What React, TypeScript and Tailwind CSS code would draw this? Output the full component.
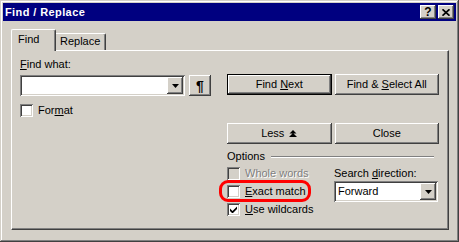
const font = "font-['Liberation_Sans',Arial,sans-serif]"
const raised =
  "shadow-[inset_-1px_-1px_0_#404040,inset_1px_1px_0_#ffffff,inset_-2px_-2px_0_#808080,inset_2px_2px_0_#d4d0c8]"
const sunken =
  "shadow-[inset_1px_1px_0_#808080,inset_-1px_-1px_0_#ffffff,inset_2px_2px_0_#404040,inset_-2px_-2px_0_#d4d0c8]"

function Arrow() {
  return (
    <svg width="7" height="4" viewBox="0 0 7 4">
      <path d="M0 0 H7 L3.5 4 Z" fill="#000" />
    </svg>
  )
}

function Combo({ value, className }: { value?: string; className: string }) {
  return (
    <div className={`h-[21px] bg-white p-[2px] flex ${sunken} ${className}`}>
      <div className="flex-1 flex items-center pl-[2px] text-black">{value}</div>
      <div className={`w-[16px] h-full bg-[#d4d0c8] flex items-center justify-center ${raised}`}>
        <Arrow />
      </div>
    </div>
  )
}

function Button({ children, isDefault }: { children: React.ReactNode; isDefault?: boolean }) {
  return (
    <div
      className={`h-[21px] w-[105px] bg-[#d4d0c8] flex items-center justify-center text-black ${raised} ${
        isDefault ? "border border-black" : ""
      }`}
    >
      {children}
    </div>
  )
}

function Checkbox({
  label,
  checked,
  disabled,
}: {
  label: React.ReactNode
  checked?: boolean
  disabled?: boolean
}) {
  return (
    <div className="flex items-center h-[13px] gap-[5px]">
      <div
        className={`w-[13px] h-[13px] flex items-center justify-center ${sunken} ${
          disabled ? "bg-[#d4d0c8]" : "bg-white"
        }`}
      >
        {checked && (
          <svg width="7" height="7" viewBox="0 0 7 7">
            <path d="M0 2.5 L2.5 5 L7 0.5 V3 L2.5 7.5 L0 5 Z" fill="#000" />
          </svg>
        )}
      </div>
      <span className={disabled ? "text-[#808080] [text-shadow:1px_1px_0_#ffffff]" : "text-black"}>{label}</span>
    </div>
  )
}

export default function App() {
  return (
    <div
      className={`relative w-[459px] h-[242px] bg-[#d4d0c8] p-[3px] text-[11px] leading-[13px] ${font} shadow-[inset_-1px_-1px_0_#404040,inset_1px_1px_0_#d4d0c8,inset_-2px_-2px_0_#808080,inset_2px_2px_0_#ffffff]`}
    >
      {/* Title bar */}
      <div className="h-[18px] bg-[#000080] flex items-center pl-[2px] pr-[2px]">
        <span className="flex-1 text-white font-bold tracking-[0.4px]">Find / Replace</span>
        <div className="flex gap-[2px]">
          <div className={`w-[16px] h-[14px] bg-[#d4d0c8] flex items-center justify-center ${raised}`}>
            <span className="font-bold text-[12px] leading-[12px] text-black">?</span>
          </div>
          <div className={`w-[16px] h-[14px] bg-[#d4d0c8] flex items-center justify-center ${raised}`}>
            <svg width="8" height="7" viewBox="0 0 8 7">
              <path d="M0.5 0.3 L7.5 6.7 M7.5 0.3 L0.5 6.7" stroke="#000" strokeWidth="1.7" />
            </svg>
          </div>
        </div>
      </div>

      {/* Body */}
      <div className="pt-[8px] pl-[8px]">
        {/* Tabs */}
        <div className="h-[21px] flex items-end">
          <div className="relative z-10 h-[22px] w-[45px] -mb-px bg-[#d4d0c8] border-l border-t border-r border-l-white border-t-white border-r-[#404040] rounded-t-[2px] shadow-[inset_-1px_0_0_#808080] pl-[6px] pt-[3px] text-black">
            Find
          </div>
          <div className="h-[17px] w-[50px] border-t border-r border-t-white border-r-[#404040] rounded-tr-[2px] shadow-[inset_-1px_0_0_#808080] pl-[4px] pt-[1px] text-black">
            Replace
          </div>
        </div>

        {/* Panel */}
        <div className="h-[180px] w-[438px] border border-t-white border-l-white border-r-[#404040] border-b-[#404040] shadow-[inset_-1px_-1px_0_#808080] flex pl-[8px]">
          {/* Left column */}
          <div className="w-[191px] flex flex-col">
            <div className="mt-[7px] text-black">
              <span className="underline underline-offset-[1px]">F</span>ind what:
            </div>
            <div className="mt-[4px] flex">
              <Combo className="w-[165px]" />
              <div className={`ml-[4px] w-[22px] h-[21px] bg-[#d4d0c8] flex items-center justify-center ${raised}`}>
                <span className="font-bold text-[14px] leading-[14px] text-black">¶</span>
              </div>
            </div>
            <div className="mt-[8px]">
              <Checkbox
                label={
                  <>
                    For<span className="underline underline-offset-[1px]">m</span>at
                  </>
                }
              />
            </div>
          </div>

          {/* Right column */}
          <div className="ml-[16px] w-[212px] flex flex-col">
            <div className="mt-[23px] flex gap-[3px]">
              <Button isDefault>
                <span>
                  Find <span className="underline underline-offset-[1px]">N</span>ext
                </span>
              </Button>
              <Button>
                <span>
                  Find &amp; <span className="underline underline-offset-[1px]">S</span>elect All
                </span>
              </Button>
            </div>
            <div className="mt-[28px] flex gap-[3px]">
              <Button>
                <span className="flex items-center gap-[5px]">
                  Less
                  <svg width="8" height="7" viewBox="0 0 8 7">
                    <path d="M4 0 L7.5 3.5 H0.5 Z M4 3 L8 7 H0 Z" fill="#000" />
                  </svg>
                </span>
              </Button>
              <Button>Close</Button>
            </div>
            <div className="mt-[6px] h-[13px] flex items-center">
              <span className="text-black">Options</span>
              <div className="flex-1 ml-[6px] mr-[5px] h-[2px] border-t border-b border-t-[#808080] border-b-white" />
            </div>
            <div className="mt-[4px] flex">
              <div className="w-[107px] flex flex-col gap-[5px]">
                <Checkbox label="Whole words" disabled />
                <Checkbox
                  label={
                    <>
                      <span className="underline underline-offset-[1px]">E</span>xact match
                    </>
                  }
                />
                <Checkbox
                  checked
                  label={
                    <>
                      <span className="underline underline-offset-[1px]">U</span>se wildcards
                    </>
                  }
                />
              </div>
              <div className="flex flex-col">
                <div className="text-black">
                  Search <span className="underline underline-offset-[1px]">d</span>irection:
                </div>
                <Combo className="mt-[1px] w-[104px]" value="Forward" />
              </div>
            </div>
          </div>
        </div>
      </div>

      {/* Red annotation ring */}
      <div className="absolute left-[219px] top-[180px] w-[92px] h-[22px] border-[3px] border-[#ff0000] rounded-[9px] pointer-events-none" />
    </div>
  )
}
